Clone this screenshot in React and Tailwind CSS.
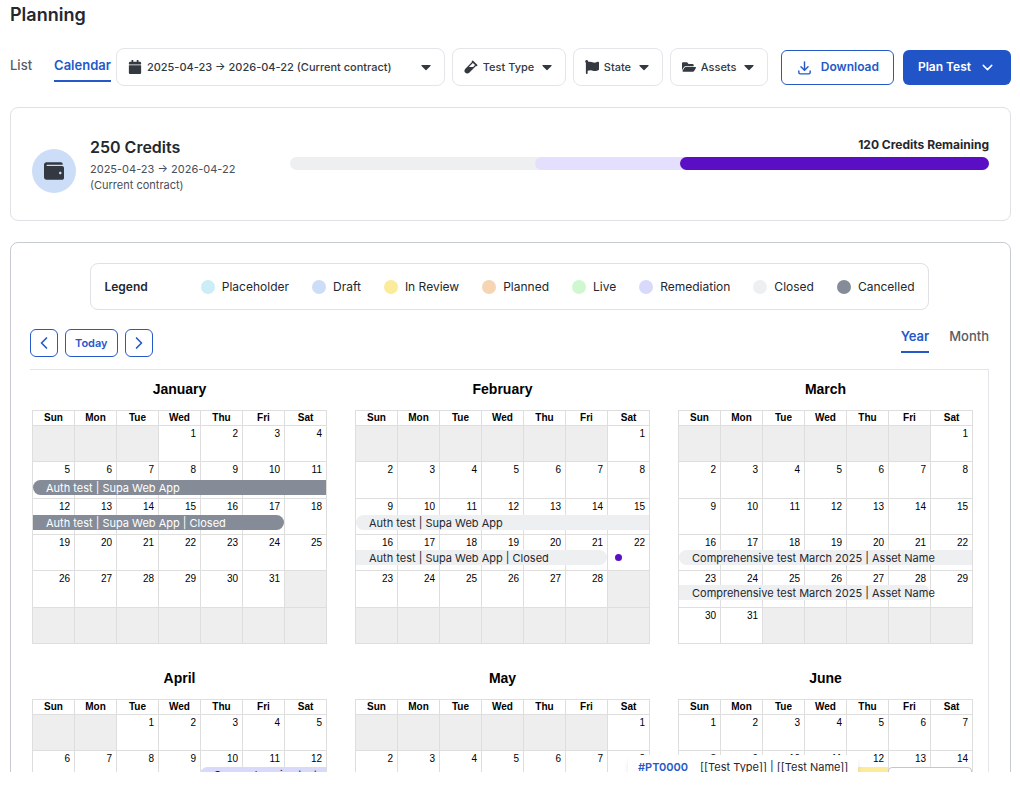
import { useState } from "react";
import {
  FaCalendar,
  FaCaretDown,
  FaFlag,
  FaFolderOpen,
  FaVial,
  FaWallet,
} from "react-icons/fa";
import { TbDownload } from "react-icons/tb";
import { ChevronDown, ChevronLeft, ChevronRight } from "lucide-react";

const weekDays = ["Sun", "Mon", "Tue", "Wed", "Thu", "Fri", "Sat"];

const legend = [
  { name: "Placeholder", color: "bg-[#cdedf6]" },
  { name: "Draft", color: "bg-[#ccdef7]" },
  { name: "In Review", color: "bg-[#fceb9a]" },
  { name: "Planned", color: "bg-[#f5d5b3]" },
  { name: "Live", color: "bg-[#d0f8d0]" },
  { name: "Remediation", color: "bg-[#d9d9fb]" },
  { name: "Closed", color: "bg-[#eeeff1]" },
  { name: "Cancelled", color: "bg-[#858c98]" },
];

const cancelled = "bg-[#858c98] text-white";
const closed = "bg-[#eeeff1] text-[#24272e]";

const firstQuarter = "top-[35px]";
const secondQuarter = "top-[33px]";

// offset = empty cells before the 1st, place = week row and column span
const months = [
  {
    name: "January",
    offset: 3,
    days: 31,
    eventsTop: firstQuarter,
    events: [
      { label: "Auth test | Supa Web App", place: "row-start-2 col-start-1 col-span-7 rounded-l-full", color: cancelled },
      { label: "Auth test | Supa Web App | Closed", place: "row-start-3 col-start-1 col-span-6 rounded-r-full", color: cancelled },
    ],
  },
  {
    name: "February",
    offset: 6,
    days: 28,
    eventsTop: firstQuarter,
    events: [
      { label: "Auth test | Supa Web App", place: "row-start-3 col-start-1 col-span-7 rounded-l-full", color: closed },
      { label: "Auth test | Supa Web App | Closed", place: "row-start-4 col-start-1 col-span-6 rounded-r-full", color: closed },
    ],
    dot: "row-start-4 col-start-7",
  },
  {
    name: "March",
    offset: 6,
    days: 31,
    eventsTop: firstQuarter,
    events: [
      { label: "Comprehensive test March 2025 | Asset Name", place: "row-start-4 col-start-1 col-span-7 rounded-l-full", color: closed },
      { label: "Comprehensive test March 2025 | Asset Name", place: "row-start-5 col-start-1 col-span-6 rounded-r-full", color: closed },
    ],
  },
  {
    name: "April",
    offset: 2,
    days: 30,
    eventsTop: secondQuarter,
    events: [
      { label: "Comprehensive test", place: "row-start-2 col-start-5 col-span-3 rounded-l-full", color: "bg-[#d9d9fb] text-[#24272e]" },
    ],
  },
  { name: "May", offset: 6, days: 31, eventsTop: secondQuarter, events: [] },
  {
    name: "June",
    offset: 0,
    days: 30,
    eventsTop: secondQuarter,
    events: [
      { label: "", place: "row-start-2 col-start-4 col-span-2", color: "bg-[#fceb9a]" },
      { label: "", place: "row-start-2 col-start-6 col-span-2 rounded-sm border border-[#c3c5d0]", color: "bg-white" },
    ],
    tooltip: true,
  },
];

function FilterSelect({ icon: Icon, label, className = "" }) {
  return (
    <div className={`relative text-[#343841] ${className}`}>
      <Icon size={14} className="pointer-events-none absolute left-3 top-3" />
      <select
        aria-label={label}
        className="h-[38px] w-full appearance-none rounded-lg border border-[#e4e5e8] bg-transparent pl-[30px] pr-[30px] text-[11px] font-medium"
      >
        <option>{label}</option>
      </select>
      <FaCaretDown size={16} className="pointer-events-none absolute right-[11px] top-[11px]" />
    </div>
  );
}

function Tab({ active, onClick, children }) {
  return (
    <button
      onClick={onClick}
      className={`border-b-2 pb-2 text-[13px] leading-[14px] ${
        active
          ? "border-[#2558c9] font-semibold text-[#2558c9]"
          : "border-transparent font-medium text-[#565b66]"
      }`}
    >
      {children}
    </button>
  );
}

function Month({ month }) {
  const cells = Array.from({ length: 42 }, (_, i) => {
    const day = i - month.offset + 1;
    return day > 0 && day <= month.days ? day : null;
  });

  return (
    <section>
      <h3 className="mb-[11px] text-center text-sm font-bold">{month.name}</h3>

      <div className="relative">
        <table className="h-[234px] w-full table-fixed border-collapse">
          <thead>
            <tr className="h-[15px]">
              {weekDays.map((d) => (
                <th key={d} className="border border-[#dedede] p-0 text-[10px] leading-[14px] font-bold">
                  {d}
                </th>
              ))}
            </tr>
          </thead>
          <tbody>
            {[0, 1, 2, 3, 4, 5].map((week) => (
              <tr key={week} className="h-9">
                {cells.slice(week * 7, week * 7 + 7).map((day, i) => (
                  <td
                    key={i}
                    className={`border border-[#dedede] px-1 py-0 text-right align-top text-[10px] leading-4 ${
                      day ? "bg-white" : "bg-[#eeeeee]"
                    }`}
                  >
                    {day}
                  </td>
                ))}
              </tr>
            ))}
          </tbody>
        </table>

        {/* event bars */}
        <div
          className={`absolute inset-x-px grid auto-rows-[35px] grid-cols-7 font-['Inter',sans-serif] ${month.eventsTop}`}
        >
          {month.events.map((event, i) => (
            <div
              key={i}
              className={`h-[15px] whitespace-nowrap pl-[13px] text-[11px] leading-4 ${event.place} ${event.color}`}
            >
              {event.label}
            </div>
          ))}
          {month.dot && (
            <span className={`mt-1 ml-2 size-[7px] rounded-full bg-[#5a0fc4] ${month.dot}`} />
          )}
        </div>

        {month.tooltip && (
          <div className="absolute -left-[50px] top-14 flex gap-3 rounded-md bg-white px-[10px] py-1 font-['Inter',sans-serif] text-[11px] leading-4 whitespace-nowrap text-[#24272e] shadow-md">
            <a href="#PT0000" className="font-semibold text-[#2558c9]">
              #PT0000
            </a>
            <span>[[Test Type]] | [[Test Name]]</span>
          </div>
        )}
      </div>
    </section>
  );
}

export default function App() {
  const [tab, setTab] = useState("Calendar");
  const [view, setView] = useState("Year");

  return (
    <main className="h-screen bg-white pb-[14px] font-['Inter',sans-serif] text-[#24272e]">
      <div className="h-full overflow-hidden pt-1 pr-[9px] pl-[10px]">
        <h1 className="text-lg leading-[22px] font-semibold">Planning</h1>

        {/* Toolbar */}
        <div className="mt-[22px] flex items-center">
          <div className="mr-[5px] flex gap-[22px] pt-[6px]">
            {["List", "Calendar"].map((t) => (
              <Tab key={t} active={tab === t} onClick={() => setTab(t)}>
                {t}
              </Tab>
            ))}
          </div>

          <div className="mr-[13px] flex flex-1 gap-[7px]">
            <FilterSelect
              icon={FaCalendar}
              label="2025-04-23 → 2026-04-22 (Current contract)"
              className="flex-1"
            />
            <FilterSelect icon={FaVial} label="Test Type" />
            <FilterSelect icon={FaFlag} label="State" />
            <FilterSelect icon={FaFolderOpen} label="Assets" />
          </div>

          <button className="mr-[9px] flex h-[35px] items-center gap-2 rounded-md border border-[#2558c9] px-[14px] text-xs font-semibold text-[#2558c9]">
            <TbDownload size={17} />
            Download
          </button>
          <button className="flex h-[35px] items-center gap-2 rounded-md bg-[#2155c7] px-[15px] text-xs font-semibold text-white">
            Plan Test
            <ChevronDown size={17} />
          </button>
        </div>

        {/* Credits */}
        <div className="mt-[21px] flex h-[114px] items-center rounded-lg border border-[#e0e1e4] px-[21px]">
          <div className="mt-[14px] flex size-11 items-center justify-center rounded-full bg-[#ccdef7] text-[#343841]">
            <FaWallet size={20} />
          </div>
          <div className="mt-[2px] ml-[14px] w-[200px]">
            <h2 className="mb-1 text-base leading-5 font-semibold">250 Credits</h2>
            <p className="text-[11px] leading-4 text-[#4a4e57]">
              2025-04-23 → 2026-04-22
              <br />
              (Current contract)
            </p>
          </div>
          <div className="mb-[22px] flex-1">
            <p className="mb-1 text-right text-xs leading-4 font-bold">
              120 Credits Remaining
            </p>
            <div className="flex h-[13px] justify-end rounded-full bg-[#eeeff1]">
              <div className="flex w-[65%] justify-end rounded-full bg-[#e4dffd]">
                <div className="w-[68%] rounded-full bg-[#5a0fc4]" />
              </div>
            </div>
          </div>
        </div>

        {/* Calendar */}
        <div className="mt-[21px] rounded-lg border border-[#c9cbd3] pr-[21px] pl-[19px] pt-5">
          <div className="mx-auto flex h-[47px] w-fit items-center rounded-lg border border-[#e0e1e4] px-[13px] text-xs">
            <span className="mr-[53px] font-semibold">Legend</span>
            <ul className="flex gap-[23px]">
              {legend.map((item) => (
                <li key={item.name} className="flex items-center gap-[7px]">
                  <span className={`size-[14px] rounded-full ${item.color}`} />
                  {item.name}
                </li>
              ))}
            </ul>
          </div>

          <div className="mt-[19px] flex items-start justify-between">
            <div className="flex gap-[7px] text-[#2558c9]">
              <button aria-label="Previous" className="flex size-7 items-center justify-center rounded-md border border-[#2558c9]">
                <ChevronLeft size={20} />
              </button>
              <button className="h-7 rounded-md border border-[#2558c9] px-[9px] text-[11px] font-semibold">
                Today
              </button>
              <button aria-label="Next" className="flex size-7 items-center justify-center rounded-md border border-[#2558c9]">
                <ChevronRight size={20} />
              </button>
            </div>
            <div className="flex gap-5">
              {["Year", "Month"].map((v) => (
                <Tab key={v} active={view === v} onClick={() => setView(v)}>
                  {v}
                </Tab>
              ))}
            </div>
          </div>

          <div className="mt-3 grid grid-cols-3 gap-x-7 gap-y-6 border-t border-r border-[#e4e5e8] pt-[9px] pr-[15px] pb-6 pl-[2px] font-['Liberation_Sans',Arial,sans-serif] text-black">
            {months.map((month) => (
              <Month key={month.name} month={month} />
            ))}
          </div>
        </div>
      </div>
    </main>
  );
}
